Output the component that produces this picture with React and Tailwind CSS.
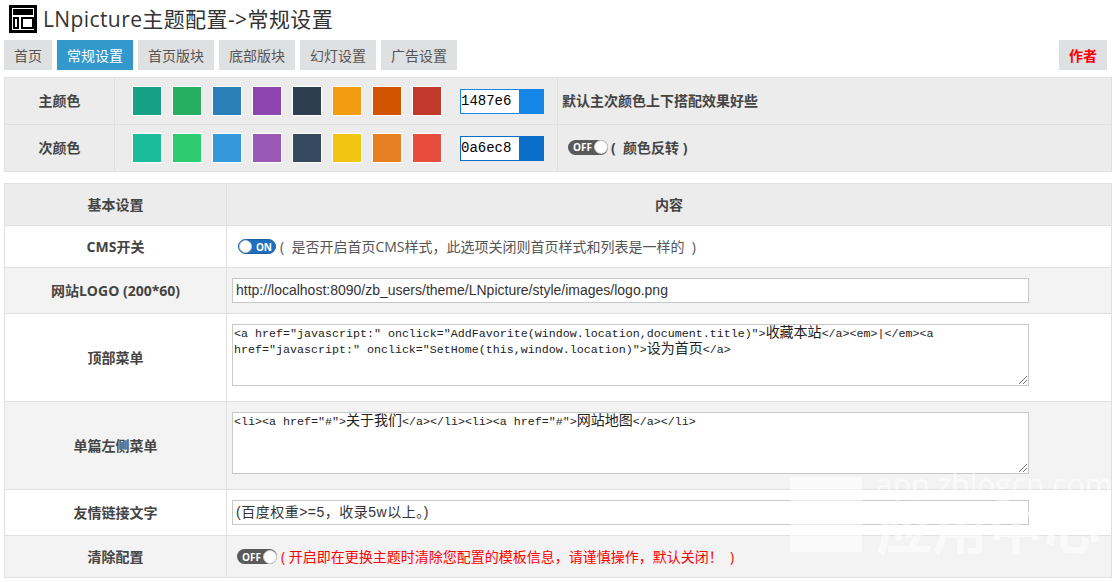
import React from 'react';

const cjk = 'font-["Open_Sans","Noto_Sans_CJK_SC",sans-serif]';
const mono = 'font-["Liberation_Mono","Noto_Sans_CJK_SC",monospace]';

const tabs = [
  { label: '首页', width: 'w-[48px]' },
  { label: '常规设置', width: 'w-[76px]', active: true },
  { label: '首页版块', width: 'w-[76px]' },
  { label: '底部版块', width: 'w-[76px]' },
  { label: '幻灯设置', width: 'w-[76px]' },
  { label: '广告设置', width: 'w-[76px]' },
];

const primary = ['#16a085', '#27ae60', '#2980b9', '#8e44ad', '#2c3e50', '#f39c12', '#d35400', '#c0392b'];
const secondary = ['#1abc9c', '#2ecc71', '#3498db', '#9b59b6', '#34495e', '#f1c40f', '#e67e22', '#e74c3c'];

function ColorRow({ label, colors, value, chip, children, last }) {
  return (
    <div className={`flex ${last ? 'h-[46px]' : 'h-[47px] border-b border-[#e0e0e0]'}`}>
      <div className="w-[110px] flex items-center justify-center pb-[2px] border-r border-[#e0e0e0] text-[14px] font-bold text-[#444]">
        {label}
      </div>
      <div className="flex items-center pl-[17px] w-[443px] border-r border-[#e0e0e0]">
        <div className="flex gap-[10px]">
          {colors.map((c) => (
            <div key={c} className="w-[30px] h-[30px] border border-white" style={{ backgroundColor: c }} />
          ))}
        </div>
        <div className="flex ml-[18px] h-[25px] w-[84px]" style={{ backgroundColor: chip }}>
          <div className={`m-[1px] w-[58px] bg-white text-[14px] leading-[22px] text-black ${mono}`}>{value}</div>
        </div>
      </div>
      <div className="flex-1 flex items-center pb-[2px] text-[14px] font-bold text-[#444]">{children}</div>
    </div>
  );
}

function Toggle({ on }) {
  if (on) {
    return (
      <span className="inline-flex items-center justify-between w-[38px] h-[15px] rounded-full bg-[#1f6fbe] border border-[#1a5fa5]">
        <span className="w-[13px] h-[13px] rounded-full bg-white border border-[#ccc]" />
        <span className="text-[10px] font-bold text-white leading-none pr-[3px] font-['Open_Sans',sans-serif]">ON</span>
      </span>
    );
  }
  return (
    <span className="inline-flex items-center justify-between w-[40px] h-[15px] rounded-full bg-[#5a5a5a]">
      <span className="text-[10px] font-bold text-white leading-none pl-[5px] font-['Open_Sans',sans-serif]">OFF</span>
      <span className="w-[14px] h-[14px] rounded-full bg-white border border-[#ccc]" />
    </span>
  );
}

function Row({ label, bg, height, children, last }) {
  return (
    <div className={`flex ${height} ${bg} ${last ? '' : 'border-b border-[#e0e0e0]'}`}>
      <div className="w-[222px] flex items-center justify-center border-r border-[#e0e0e0] text-[14px] font-bold text-[#444]">
        {label}
      </div>
      <div className="flex-1 px-[5px]">{children}</div>
    </div>
  );
}

function TextBox({ children, className }) {
  return (
    <div className={`w-[797px] bg-white border border-[#c8c8c8] text-[14px] leading-[22px] text-[#333] pl-[3px] font-["Liberation_Sans","Noto_Sans_CJK_SC",sans-serif] ${className}`}>
      {children}
    </div>
  );
}

function Zh({ children }) {
  return <span className="inline-block h-[16px] text-[14px] leading-[16px]">{children}</span>;
}

function Area({ children, className }) {
  return (
    <div className={`relative w-[797px] h-[62px] bg-white border border-[#c8c8c8] text-[11.67px] leading-[16px] text-[#222] pl-[1px] ${mono} ${className}`}>
      {children}
      <svg className="absolute right-[1px] bottom-[1px]" width="8" height="8" viewBox="0 0 8 8">
        <path d="M0 8 L8 0 M4 8 L8 4" stroke="#777" strokeWidth="1" />
      </svg>
    </div>
  );
}

export default function App() {
  return (
    <div className={`relative w-[1116px] h-[582px] overflow-hidden bg-white pl-[4px] pr-[4px] ${cjk}`}>
      {/* Title */}
      <div className="flex items-center h-[40px] pl-[5px] pb-[2px] gap-[6px]">
        <svg width="28" height="28" viewBox="0 0 28 28">
          <rect x="1.5" y="1.5" width="25" height="25" fill="#fff" stroke="#000" strokeWidth="3" />
          <rect x="4" y="4" width="20" height="6" fill="#000" />
          <rect x="5" y="13" width="4" height="10" fill="none" stroke="#000" strokeWidth="2" />
          <rect x="13" y="13" width="11" height="10" fill="none" stroke="#000" strokeWidth="2" />
        </svg>
        <h1 className="text-[21px] tracking-[0.4px] font-normal text-[#333] leading-none">LNpicture主题配置-&gt;常规设置</h1>
      </div>

      {/* Tabs */}
      <div className="flex items-center h-[30px] pr-[5px]">
        <div className="flex gap-[5px]">
          {tabs.map((t) => (
            <div
              key={t.label}
              className={`${t.width} h-[30px] flex items-center justify-center text-[14px] ${t.active ? 'bg-[#3399cc] text-white' : 'bg-[#dfe0e2] text-[#555]'}`}
            >
              {t.label}
            </div>
          ))}
        </div>
        <div className="ml-auto w-[48px] h-[30px] bg-[#dfe0e2] flex items-center justify-center text-[14px] font-bold text-[#f00]">作者</div>
      </div>

      {/* Colour table */}
      <div className="mt-[7px] w-[1108px] border border-[#e0e0e0] bg-[#ececec]">
        <ColorRow label="主颜色" colors={primary} value="1487e6" chip="#1487e6">
          <span className="pl-[4px]">默认主次颜色上下搭配效果好些</span>
        </ColorRow>
        <ColorRow label="次颜色" colors={secondary} value="0a6ec8" chip="#0a6ec8" last>
          <span className="flex items-center pl-[10px] gap-[3px]">
            <Toggle />
            <span>(&nbsp; 颜色反转 )</span>
          </span>
        </ColorRow>
      </div>

      {/* Settings table */}
      <div className="mt-[11px] w-[1108px] border border-[#e0e0e0]">
        <div className="flex h-[42px] bg-[#ececec] border-b border-[#e0e0e0] text-[14px] font-bold text-[#444]">
          <div className="w-[222px] flex items-center justify-center border-r border-[#e0e0e0]">基本设置</div>
          <div className="flex-1 flex items-center justify-center">内容</div>
        </div>
        <Row label="CMS开关" bg="bg-white" height="h-[42px]">
          <div className="flex items-center h-full pl-[6px] gap-[4px] text-[14px] text-[#555]">
            <Toggle on />
            <span>(&nbsp; 是否开启首页CMS样式，此选项关闭则首页样式和列表是一样的 &nbsp;)</span>
          </div>
        </Row>
        <Row label="网站LOGO (200*60)" bg="bg-[#f3f3f3]" height="h-[46px]">
          <TextBox className="mt-[10px] h-[25px]">http://localhost:8090/zb_users/theme/LNpicture/style/images/logo.png</TextBox>
        </Row>
        <Row label="顶部菜单" bg="bg-white" height="h-[88px]">
          <Area className="mt-[10px]">
            <div className="h-[16px] whitespace-nowrap">&lt;a href="javascript:" onclick="AddFavorite(window.location,document.title)"&gt;<Zh>收藏本站</Zh>&lt;/a&gt;&lt;em&gt;|&lt;/em&gt;&lt;a</div>
            <div className="h-[16px] whitespace-nowrap">href="javascript:" onclick="SetHome(this,window.location)"&gt;<Zh>设为首页</Zh>&lt;/a&gt;</div>
          </Area>
        </Row>
        <Row label="单篇左侧菜单" bg="bg-[#f3f3f3]" height="h-[88px]">
          <Area className="mt-[10px]">
            &lt;li&gt;&lt;a href="#"&gt;<Zh>关于我们</Zh>&lt;/a&gt;&lt;/li&gt;&lt;li&gt;&lt;a href="#"&gt;<Zh>网站地图</Zh>&lt;/a&gt;&lt;/li&gt;
          </Area>
        </Row>
        <Row label="友情链接文字" bg="bg-white" height="h-[46px]">
          <TextBox className="mt-[10px] h-[25px] tracking-[0.5px]">(百度权重&gt;=5，收录5w以上。)</TextBox>
        </Row>
        <Row label="清除配置" bg="bg-[#f3f3f3]" height="h-[41px]" last>
          <div className="flex items-center h-full pl-[5px] gap-[4px] text-[14px] text-[#f00]">
            <Toggle />
            <span>( 开启即在更换主题时清除您配置的模板信息，请谨慎操作，默认关闭！ &nbsp;)</span>
          </div>
        </Row>
      </div>

      {/* Watermark */}
      <div className="absolute left-[790px] top-[468px] flex gap-[14px] pointer-events-none">
        <div className="mt-[9px] w-[72px] h-[75px] bg-white/60" />
        <div className="flex flex-col">
          <span className="text-[30px] leading-[32px] text-white/60 font-['Open_Sans',sans-serif]">app.zblogcn.com</span>
          <span className="text-[56px] leading-[54px] font-bold text-white/60">应用中心</span>
        </div>
      </div>
    </div>
  );
}
